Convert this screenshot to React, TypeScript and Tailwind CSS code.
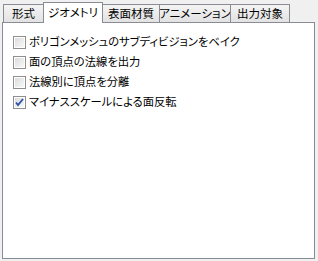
import React from 'react';

const tabs = [
  { label: '形式', w: 41 },
  { label: 'ジオメトリ', w: 60 },
  { label: '表面材質', w: 58 },
  { label: 'アニメーション', w: 72 },
  { label: '出力対象', w: 60 },
];

const options = [
  { label: 'ポリゴンメッシュのサブディビジョンをベイク', checked: false },
  { label: '面の頂点の法線を出力', checked: false },
  { label: '法線別に頂点を分離', checked: false },
  { label: 'マイナススケールによる面反転', checked: true },
];

function CheckBox({ checked }: { checked: boolean }) {
  return (
    <svg width="13" height="13" viewBox="0 0 13 13" className="shrink-0">
      <defs>
        <linearGradient id="cbg" x1="0" y1="0" x2="1" y2="1">
          <stop offset="0" stopColor="#dcdcdc" />
          <stop offset="1" stopColor="#f7f7f7" />
        </linearGradient>
      </defs>
      <rect x="0.5" y="0.5" width="12" height="12" fill="#ffffff" stroke="#8f8f8f" />
      <rect x="2" y="2" width="9" height="9" fill="url(#cbg)" />
      {checked && (
        <path d="M3 6.5 L5 9 L10 3" fill="none" stroke="#2a4ea8" strokeWidth="1.8" />
      )}
    </svg>
  );
}

export default function App() {
  const font = { fontFamily: '"Noto Sans CJK JP", "Noto Sans", sans-serif' };
  return (
    <div className="w-[318px] h-[261px] bg-[#f0f0f0] text-black overflow-hidden" style={font}>
      <div className="flex items-end h-[22px] pl-[3px] relative z-10">
        {tabs.map((t, i) => {
          const sel = i === 1;
          return (
            <div
              key={t.label}
              style={{ width: t.w }}
              className={
                sel
                  ? "h-[21px] -mb-px -ml-px bg-white border border-b-0 border-[#898c95] flex items-center justify-center whitespace-nowrap text-[11.5px] [font-feature-settings:'palt']"
                  : "h-[18px] bg-gradient-to-b from-[#f4f4f4] to-[#e2e2e2] border border-b-0 border-[#898c95] -ml-px first:ml-0 flex items-center justify-center whitespace-nowrap text-[11.5px] [font-feature-settings:'palt']"
              }
            >
              {t.label}
            </div>
          );
        })}
      </div>
      <div className="mx-[2px] w-[313px] h-[237px] bg-white border border-[#898c95] pt-[9px] pl-[10px] flex flex-col">
        {options.map((o) => (
          <div key={o.label} className="flex items-center gap-[3px] h-[20px] shrink-0">
            <CheckBox checked={o.checked} />
            <span className="text-[11.3px] leading-none whitespace-nowrap [font-feature-settings:'palt']">{o.label}</span>
          </div>
        ))}
      </div>
    </div>
  );
}
